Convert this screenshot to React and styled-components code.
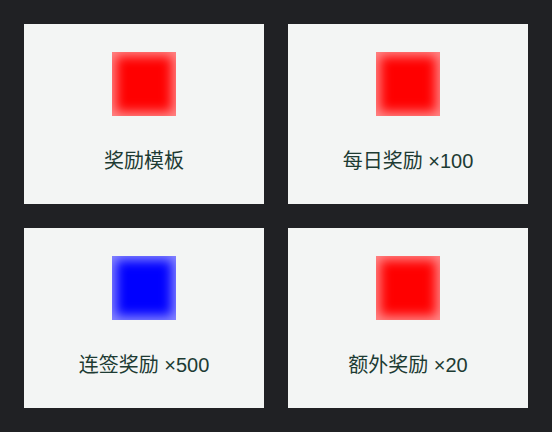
import styled, { createGlobalStyle } from "styled-components";

const GlobalStyle = createGlobalStyle`
  html, body {
    margin: 0;
    padding: 0;
    background: #202124;
  }
`;

const Grid = styled.div`
  display: grid;
  grid-template-columns: 240px 240px;
  gap: 24px;
  padding: 24px;
  width: 552px;
  box-sizing: border-box;
`;

const Card = styled.div`
  height: 180px;
  background: #f3f5f4;
  display: flex;
  flex-direction: column;
  align-items: center;
  padding-top: 28px;
  box-sizing: border-box;
  gap: 33px;
`;

const Swatch = styled.div`
  width: 64px;
  height: 64px;
  background: ${(p) => p.color};
  box-shadow: inset 0 0 12px 4px rgba(255, 255, 255, 0.55);
`;

const Label = styled.div`
  font-family: "Liberation Sans", "Noto Sans CJK SC", sans-serif;
  font-size: 20px;
  line-height: 24px;
  color: #1d3b33;
`;

const items = [
  { label: "奖励模板", color: "#ff0000" },
  { label: "每日奖励 ×100", color: "#ff0000" },
  { label: "连签奖励 ×500", color: "#0000ff" },
  { label: "额外奖励 ×20", color: "#ff0000" },
];

export default function App() {
  return (
    <>
      <GlobalStyle />
      <Grid>
        {items.map((it) => (
          <Card key={it.label}>
            <Swatch color={it.color} />
            <Label>{it.label}</Label>
          </Card>
        ))}
      </Grid>
    </>
  );
}
